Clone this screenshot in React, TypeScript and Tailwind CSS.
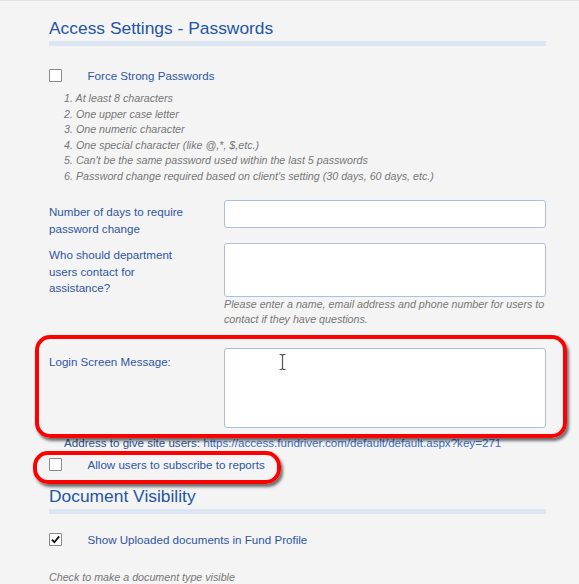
const rules = [
  "At least 8 characters",
  "One upper case letter",
  "One numeric character",
  "One special character (like @,*, $,etc.)",
  "Can't be the same password used within the last 5 passwords",
  "Password change required based on client's setting (30 days, 60 days, etc.)",
];

const CheckBox = ({ checked = false }: { checked?: boolean }) => (
  <span className="flex h-[13px] w-[13px] shrink-0 items-center justify-center rounded-[1px] border border-[#8a8a8a] bg-white">
    {checked && (
      <svg viewBox="0 0 12 12" className="h-[11px] w-[11px]">
        <path d="M2 6.2 L4.8 9 L10 2.6" fill="none" stroke="#111" strokeWidth="2" />
      </svg>
    )}
  </span>
);

const CheckRow = ({ label, checked }: { label: string; checked?: boolean }) => (
  <div className="flex h-[13px] items-center">
    <CheckBox checked={checked} />
    <span className="ml-[25.5px] text-[11.6px] leading-[15px] text-[#2f55a3]">{label}</span>
  </div>
);

const Heading = ({ title }: { title: string }) => (
  <div>
    <h2 className="text-[17.4px] leading-[22px] text-[#2455a6]">{title}</h2>
    <div className="mt-[2px] h-[5px] bg-[#dce6f3]" />
  </div>
);

export default function App() {
  return (
    <div className="relative h-[584px] overflow-hidden border-t border-[#e2e2e2] bg-[#f4f4f4] font-['Liberation_Sans',Arial,sans-serif]">
      <div className="w-[546px] pl-[49px] pt-[16px]">
        <Heading title="Access Settings - Passwords" />

        <div className="mt-[23px]">
          <CheckRow label="Force Strong Passwords" />
        </div>

        <ol className="mt-[9px] pl-[15px] text-[10.7px] leading-[15.5px] italic text-[#777]">
          {rules.map((r, i) => (
            <li key={i}>
              {i + 1}. {r}
            </li>
          ))}
        </ol>

        <div className="mt-[15.5px] flex h-[28px]">
          <label className="w-[175px] pt-[3.5px] text-[11.6px] leading-[17px] text-[#2f55a3]">
            Number of days to require
            <br />
            password change
          </label>
          <div className="h-[28px] w-[322px] rounded-[3px] border border-[#aac0e2] bg-white" />
        </div>

        <div className="mt-[15px] flex h-[54px]">
          <label className="w-[175px] pt-[4.5px] text-[11.6px] leading-[16.5px] text-[#2f55a3]">
            Who should department
            <br />
            users contact for
            <br />
            assistance?
          </label>
          <div className="h-[54px] w-[322px] rounded-[3px] border border-[#aac0e2] bg-white" />
        </div>
        <p className="pl-[175px] text-[10.7px] leading-[15px] italic text-[#777]">
          Please enter a name, email address and phone number for users to
          <br />
          contact if they have questions.
        </p>

        <div className="mt-[21px] flex">
          <label className="w-[175px] pt-[5.5px] text-[11.6px] leading-[17px] text-[#2f55a3]">
            Login Screen Message:
          </label>
          <div className="h-[80px] w-[322px] rounded-[3px] border border-[#aac0e2] bg-white" />
        </div>

        <p className="mt-[7.5px] pl-[15px] text-[11.6px] leading-[15px] text-[#2c4c8f]">
          Address to give site users:{" "}
          <span className="text-[#3a6cc2]">https://access.fundriver.com/default/default.aspx?key=271</span>
        </p>

        <div className="mt-[7.5px]">
          <CheckRow label="Allow users to subscribe to reports" />
        </div>

        <div className="mt-[14px]">
          <Heading title="Document Visibility" />
        </div>

        <div className="mt-[19px]">
          <CheckRow label="Show Uploaded documents in Fund Profile" checked />
        </div>

        <p className="mt-[24.5px] text-[10.7px] leading-[15px] italic text-[#777]">
          Check to make a document type visible
        </p>
      </div>

      {/* annotation overlays */}
      <div className="pointer-events-none absolute left-[35px] top-[334px] h-[103px] w-[532px] rounded-[15px] border-4 border-[#ff0000] shadow-[2px_3px_3px_rgba(0,0,0,0.55)]" />
      <div className="pointer-events-none absolute left-[33px] top-[450px] h-[33px] w-[248px] rounded-[15px] border-4 border-[#ff0000] shadow-[2px_3px_3px_rgba(0,0,0,0.55)]" />

      {/* text cursor */}
      <svg className="absolute left-[278px] top-[352px]" width="9" height="18" viewBox="0 0 9 18">
        <path d="M1.5 1.5 H3.5 L4.5 2.5 L5.5 1.5 H7.5 M4.5 2.5 V15.5 M1.5 16.5 H3.5 L4.5 15.5 L5.5 16.5 H7.5" fill="none" stroke="#fff" strokeWidth="2.6" />
        <path d="M1.5 1.5 H3.5 L4.5 2.5 L5.5 1.5 H7.5 M4.5 2.5 V15.5 M1.5 16.5 H3.5 L4.5 15.5 L5.5 16.5 H7.5" fill="none" stroke="#555" strokeWidth="1.2" />
      </svg>
    </div>
  );
}
